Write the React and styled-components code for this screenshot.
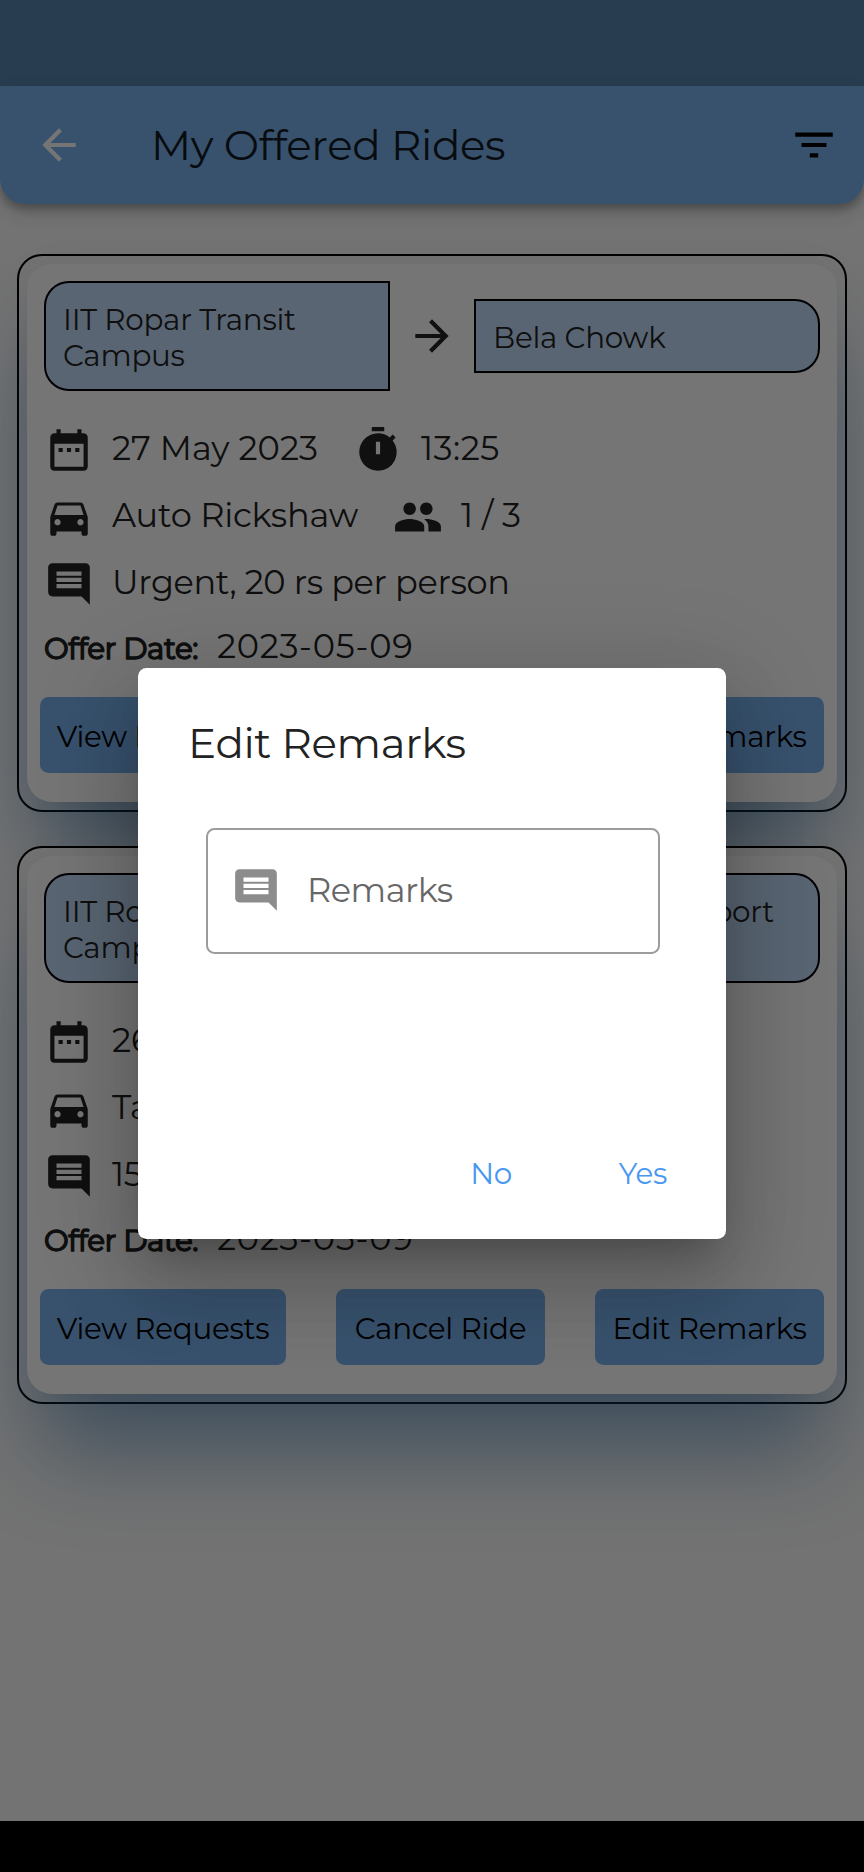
import React from "react";
import styled, { createGlobalStyle, css } from "styled-components";

const Global = createGlobalStyle`
  * { box-sizing: border-box; }
  body { margin: 0; background: #000; font-family: Montserrat, Inter, "Open Sans", sans-serif; font-weight: 450; }
  button { font: inherit; border: 0; background: none; padding: 0; }
`;

const small = css`
  font-size: 29.4px;
  letter-spacing: -0.25px;
`;
const medium = css`
  font-size: 33.6px;
  letter-spacing: -0.35px;
`;
const large = css`
  font-size: 42px;
  font-weight: 450;
  letter-spacing: -0.35px;
`;

const Phone = styled.div`
  position: relative;
  width: 864px;
  height: 1872px;
  overflow: hidden;
  display: flex;
  flex-direction: column;
  background: #fafafa;
  color: #222;
`;
const StatusBar = styled.div`
  height: 86px;
  flex: none;
  background: #5985b1;
`;
const AppBar = styled.header`
  height: 118px;
  flex: none;
  display: flex;
  align-items: center;
  padding: 0 25px 0 34px;
  border-radius: 0 0 25px 25px;
  background: #7ab3f0;
  box-shadow: 0 5px 8px rgba(0, 0, 0, 0.25), 0 9px 20px rgba(0, 0, 0, 0.14);
`;
const Title = styled.h1`
  ${large}
  flex: 1;
  margin: 0 0 0 67px;
  line-height: 50px;
  color: #131c25;
`;
const Glyph = styled.svg`
  display: block;
  flex: none;
  width: 50px;
  height: 50px;
  fill: ${(p) => p.$color || "#242424"};
`;
const List = styled.main`
  flex: 1;
  display: flex;
  flex-direction: column;
  gap: 34px;
  padding: 50px 17px 0;
`;
const Frame = styled.section`
  height: 558px;
  flex: none;
  padding: 8px;
  border: 2px solid #000;
  border-radius: 25px;
  background: #fafafa;
`;
const Card = styled.article`
  height: 538px;
  display: flex;
  flex-direction: column;
  padding: 17px 13px 0;
  border-radius: 25px;
  background: #fff;
  box-shadow: 0 70px 90px -12px rgba(23, 90, 150, 0.48), 0 8px 40px rgba(23, 60, 100, 0.07);
`;
const Route = styled.div`
  height: 110px;
  display: flex;
  align-items: center;
  justify-content: space-between;
  margin: 0 4px;
`;
const Place = styled.div`
  ${small}
  width: 346px;
  min-height: ${(p) => (p.$tall ? 110 : 74)}px;
  padding: 19px 18px 16px 17px;
  border: 2px solid #000;
  border-radius: ${(p) => (p.$end ? "0 25px 25px 0" : "25px 0 0 25px")};
  background: #c3ddfa;
  line-height: 35.5px;
`;
const Details = styled.div`
  display: flex;
  flex-direction: column;
  gap: 17px;
  margin: 34px 0 0 4px;
`;
const Row = styled.div`
  ${medium}
  height: 50px;
  display: flex;
  align-items: center;
  line-height: 40px;
  white-space: nowrap;
`;
const Value = styled.span`
  width: ${(p) => (p.$width ? `${p.$width}px` : "auto")};
  margin: 0 0 4px 18px;
  letter-spacing: ${(p) => p.$track ?? -0.35}px;
`;
const Offer = styled.div`
  display: flex;
  align-items: baseline;
  height: 42px;
  margin: 17px 0 0 4px;
  white-space: nowrap;
`;
const OfferLabel = styled.span`
  ${small}
  position: relative;
  top: 1px;
  width: 173px;
  line-height: 44px;
  letter-spacing: -0.4px;
  -webkit-text-stroke: 1.4px currentColor;
`;
const OfferDate = styled.span`
  ${medium}
  line-height: 38px;
  letter-spacing: 0.7px;
`;
const Actions = styled.div`
  display: flex;
  justify-content: space-between;
  margin-top: 29px;
`;
const Action = styled.button`
  ${small}
  width: ${(p) => p.$width}px;
  height: 75.5px;
  padding-top: 4px;
  border-radius: 8.5px;
  background: #7ab3f0;
  color: #000;
  white-space: nowrap;
`;
const Screen = styled.div`
  height: 1821px;
  display: flex;
  flex: none;
  flex-direction: column;
  overflow: hidden;
`;
const NavBar = styled.div`
  height: 51px;
  background: #000;
`;
const Scrim = styled.div`
  position: absolute;
  inset: 0;
  display: flex;
  align-items: flex-start;
  justify-content: center;
  padding-top: 668px;
  background: rgba(0, 0, 0, 0.54);
`;
const Dialog = styled.div`
  width: 588px;
  height: 571px;
  display: flex;
  flex-direction: column;
  border-radius: 8.5px;
  background: #fff;
  box-shadow: 0 23px 32px -15px rgba(0, 0, 0, 0.2), 0 50px 80px 6px rgba(0, 0, 0, 0.14),
    0 19px 97px 17px rgba(0, 0, 0, 0.12);
`;
const DialogTitle = styled.h2`
  ${large}
  margin: 50px 0 0 50px;
  line-height: 50px;
`;
const Field = styled.label`
  ${medium}
  width: 454px;
  height: 126px;
  display: flex;
  align-items: center;
  gap: 26px;
  margin: 60px 0 0 68px;
  padding: 0 0 3px 23px;
  border: 2px solid #9c9c9c;
  border-radius: 8.5px;
  letter-spacing: -0.5px;
  color: #676767;
`;
const Choices = styled.div`
  display: flex;
  justify-content: flex-end;
  margin: 194px 59px 0 0;
`;
const Choice = styled.button`
  ${small}
  width: ${(p) => p.$width}px;
  height: 50px;
  color: #4898f0;
  text-align: right;
`;

const paths = {
  back: "M20 11H7.83l5.59-5.59L12 4l-8 8 8 8 1.41-1.41L7.83 13H20v-2z",
  forward: "M12 4l-1.41 1.41L16.17 11H4v2h12.17l-5.58 5.59L12 20l8-8z",
  filter: "M10 18h4v-2h-4v2zM3 6v2h18V6H3zm3 7h12v-2H6v2z",
  date: "M9 11H7v2h2v-2zm4 0h-2v2h2v-2zm4 0h-2v2h2v-2zm2-7h-1V2h-2v2H8V2H6v2H5c-1.11 0-1.99.9-1.99 2L3 20c0 1.1.89 2 2 2h14c1.1 0 2-.9 2-2V6c0-1.1-.9-2-2-2zm0 16H5V9h14v11z",
  timer: "M15 1H9v2h6V1zm4.03 6.39 1.42-1.42c-.43-.51-.9-.99-1.41-1.41l-1.42 1.42A8.962 8.962 0 0 0 12 4c-4.97 0-9 4.03-9 9s4.02 9 9 9a8.994 8.994 0 0 0 7.03-14.61zM13 14h-2V8h2v6z",
  car: "M18.92 6.01C18.72 5.42 18.16 5 17.5 5h-11c-.66 0-1.21.42-1.42 1.01L3 12v8c0 .55.45 1 1 1h1c.55 0 1-.45 1-1v-1h12v1c0 .55.45 1 1 1h1c.55 0 1-.45 1-1v-8l-2.08-5.99zM6.5 16c-.83 0-1.5-.67-1.5-1.5S5.67 13 6.5 13s1.5.67 1.5 1.5S7.33 16 6.5 16zm11 0c-.83 0-1.5-.67-1.5-1.5s.67-1.5 1.5-1.5 1.5.67 1.5 1.5-.67 1.5-1.5 1.5zM5 11l1.5-4.5h11L19 11H5z",
  people: "M16 11c1.66 0 2.99-1.34 2.99-3S17.66 5 16 5c-1.66 0-3 1.34-3 3s1.34 3 3 3zm-8 0c1.66 0 2.99-1.34 2.99-3S9.66 5 8 5C6.34 5 5 6.34 5 8s1.34 3 3 3zm0 2c-2.33 0-7 1.17-7 3.5V19h14v-2.5c0-2.33-4.67-3.5-7-3.5zm8 0c-.29 0-.62.02-.97.05 1.16.84 1.97 1.97 1.97 3.45V19h6v-2.5c0-2.33-4.67-3.5-7-3.5z",
  comment: "M21.99 4c0-1.1-.89-2-1.99-2H4c-1.1 0-2 .9-2 2v12c0 1.1.9 2 2 2h14l4 4-.01-18zM18 14H6v-2h12v2zm0-3H6V9h12v2zm0-3H6V6h12v2z",
};

const Icon = ({ name, color }) => (
  <Glyph viewBox="0 0 24 24" $color={color}>
    <path d={paths[name]} />
  </Glyph>
);

const rides = [
  {
    from: "IIT Ropar Transit Campus",
    to: "Bela Chowk",
    date: "27 May 2023",
    time: "13:25",
    vehicle: "Auto Rickshaw",
    seats: "1 / 3",
    remarks: "Urgent, 20 rs per person",
    offered: "2023-05-09",
  },
  {
    from: "IIT Ropar Transit Campus",
    to: "Chandigarh Airport",
    tall: true,
    date: "26 May 2023",
    time: "10:30",
    vehicle: "Taxi",
    seats: "1 / 3",
    remarks: "150 rs",
    offered: "2023-05-09",
  },
];

function Ride({ ride }) {
  return (
    <Frame>
      <Card>
        <Route>
          <Place $tall>{ride.from}</Place>
          <Icon name="forward" />
          <Place $end $tall={ride.tall}>{ride.to}</Place>
        </Route>
        <Details>
          <Row>
            <Icon name="date" />
            <Value $width={241} $track={0.1}>{ride.date}</Value>
            <Icon name="timer" />
            <Value $track={0.5}>{ride.time}</Value>
          </Row>
          <Row>
            <Icon name="car" />
            <Value $width={281} $track={-0.2}>{ride.vehicle}</Value>
            <Icon name="people" />
            <Value $track={0}>{ride.seats}</Value>
          </Row>
          <Row>
            <Icon name="comment" />
            <Value>{ride.remarks}</Value>
          </Row>
        </Details>
        <Offer>
          <OfferLabel>Offer Date:</OfferLabel>
          <OfferDate>{ride.offered}</OfferDate>
        </Offer>
        <Actions>
          <Action $width={246}>View Requests</Action>
          <Action $width={208.5}>Cancel Ride</Action>
          <Action $width={229}>Edit Remarks</Action>
        </Actions>
      </Card>
    </Frame>
  );
}

export default function App() {
  return (
    <>
      <Global />
      <Phone>
        <Screen>
          <StatusBar />
          <AppBar>
            <Icon name="back" color="#fff" />
            <Title>My Offered Rides</Title>
            <Icon name="filter" color="#000" />
          </AppBar>
          <List>
            {rides.map((ride) => (
              <Ride key={ride.date} ride={ride} />
            ))}
          </List>
        </Screen>
        <NavBar />
        <Scrim>
          <Dialog>
            <DialogTitle>Edit Remarks</DialogTitle>
            <Field>
              <Icon name="comment" color="#8c8c8c" />
              Remarks
            </Field>
            <Choices>
              <Choice $width={60}>No</Choice>
              <Choice $width={155}>Yes</Choice>
            </Choices>
          </Dialog>
        </Scrim>
      </Phone>
    </>
  );
}
